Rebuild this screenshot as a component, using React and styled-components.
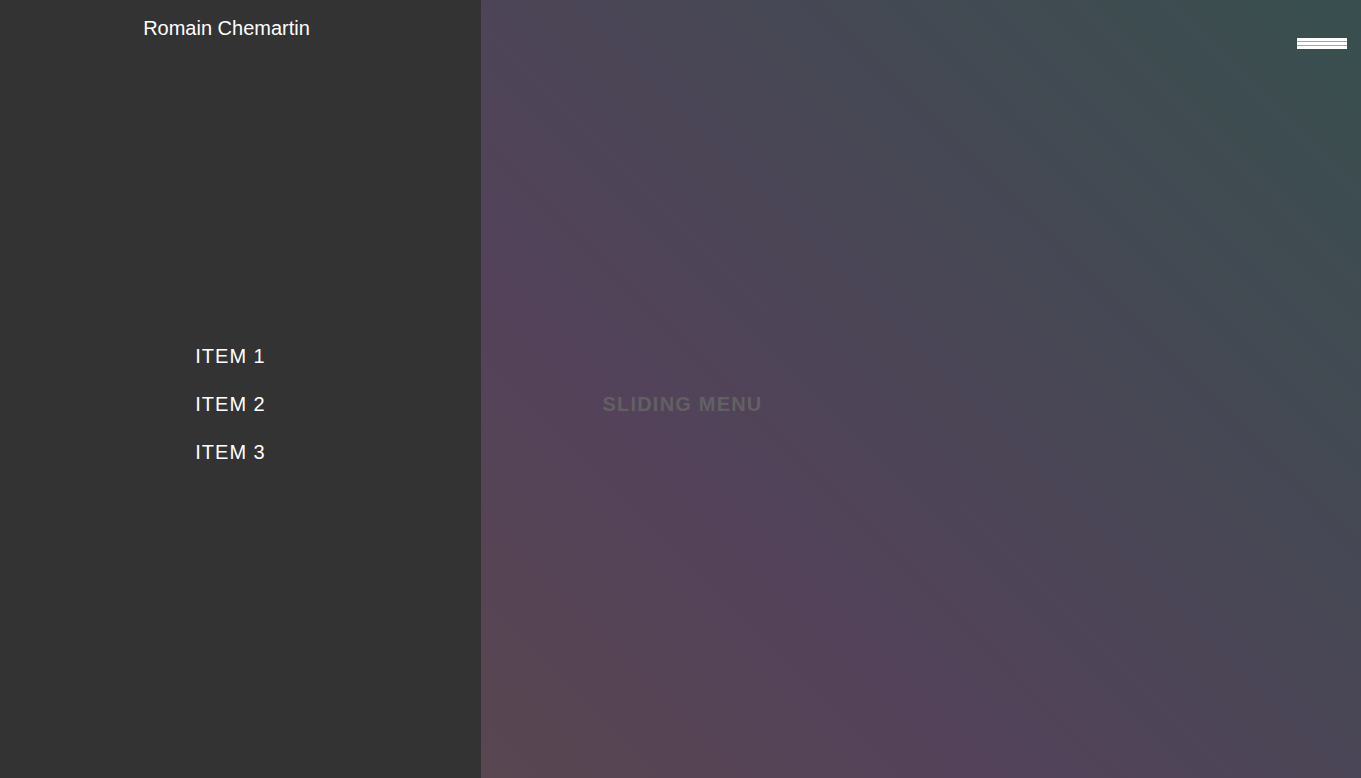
import React from 'react'
import styled, { createGlobalStyle } from 'styled-components'

const items = ['Item 1', 'Item 2', 'Item 3']

function App() {
    return (
        <>
            <GlobalStyle />
            <Page>
                <Headline>Sliding menu</Headline>
                <Burger aria-label="menu">
                    <Bar />
                    <Bar />
                    <Bar />
                </Burger>
            </Page>
            <Sidebar>
                <Title>Romain Chemartin</Title>
                <Nav>
                    {items.map((item) => (
                        <NavItem key={item}>{item}</NavItem>
                    ))}
                </Nav>
            </Sidebar>
        </>
    )
}

export default App

//#region Styling
const GlobalStyle = createGlobalStyle`
    html, body {
        margin: 0;
        padding: 0;
        height: 100%;
        overflow: hidden;
    }
    body {
        font-family: 'Liberation Sans', Arial, sans-serif;
    }
`
const Page = styled.main`
    display: flex;
    justify-content: center;
    align-items: center;
    width: 100vw;
    height: 100vh;
    box-sizing: border-box;
    padding-top: 30px;
    background: linear-gradient(45deg, #5c4a47 0%, #54425a 45%, #4a4656 65%, #384f4e 100%);
`
const Headline = styled.h1`
    margin: 0 0 0 4px;
    font: bold 20px/24px 'Liberation Sans', Arial, sans-serif;
    letter-spacing: 1.2px;
    text-transform: uppercase;
    color: #626064;
`
const Burger = styled.button`
    position: absolute;
    top: 38px;
    right: 14px;
    display: flex;
    flex-direction: column;
    gap: 1px;
    width: 50px;
    padding: 0;
    border: none;
    background: rgba(255, 255, 255, 0.5);
    cursor: pointer;
`
const Bar = styled.span`
    display: block;
    height: 3px;
    background: #fff;
`
const Sidebar = styled.aside`
    position: fixed;
    top: 0;
    left: 0;
    display: flex;
    flex-direction: column;
    width: 481px;
    height: 100vh;
    background: #333333;
`
const Title = styled.div`
    padding: 16px 28px 0 0;
    font: 20px/24px 'Liberation Sans', Arial, sans-serif;
    text-align: center;
    color: #fff;
`
const Nav = styled.ul`
    display: flex;
    flex-direction: column;
    justify-content: center;
    flex: 1;
    margin: 0 auto;
    padding: 0 20px 10px 0;
    list-style: none;
`
const NavItem = styled.li`
    font: 20px/48px 'Liberation Sans', Arial, sans-serif;
    letter-spacing: 1px;
    text-transform: uppercase;
    color: #fff;
`
//#endregion
